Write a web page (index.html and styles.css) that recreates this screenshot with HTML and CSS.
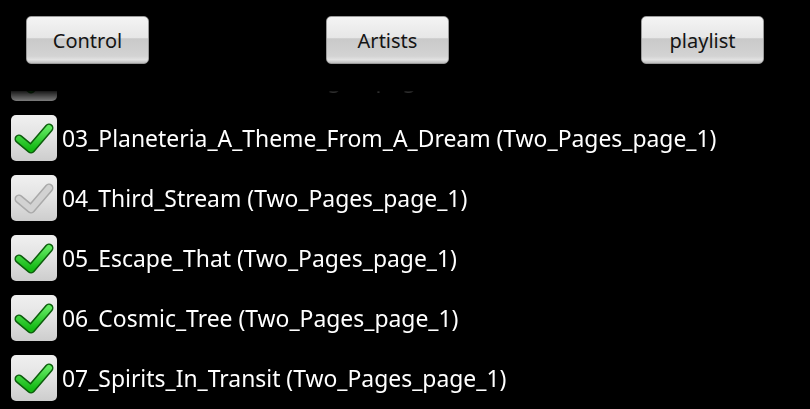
FILE: index.html
```html
<!DOCTYPE html>
<html lang="en">
<head>
    <meta charset="UTF-8">
    <title>Playlist</title>
    <link rel="stylesheet" href="styles.css">
</head>
<body>
    <div class="topbar">
        <button class="btn btn-control">Control</button>
        <button class="btn btn-artists">Artists</button>
        <button class="btn btn-playlist">playlist</button>
    </div>

    <div class="list">
        <div class="rows">
            <div class="row">
                <span class="box"><svg viewBox="0 0 46 46"><use href="#tick"/></svg></span>
                <span class="title">02_Orbital_Gate (Two_Pages_page_1)</span>
            </div>
            <div class="row">
                <span class="box"><svg viewBox="0 0 46 46"><use href="#tick"/></svg></span>
                <span class="title">03_Planeteria_A_Theme_From_A_Dream (Two_Pages_page_1)</span>
            </div>
            <div class="row">
                <span class="box off"><svg viewBox="0 0 46 46"><use href="#tick-off"/></svg></span>
                <span class="title">04_Third_Stream (Two_Pages_page_1)</span>
            </div>
            <div class="row">
                <span class="box"><svg viewBox="0 0 46 46"><use href="#tick"/></svg></span>
                <span class="title">05_Escape_That (Two_Pages_page_1)</span>
            </div>
            <div class="row">
                <span class="box"><svg viewBox="0 0 46 46"><use href="#tick"/></svg></span>
                <span class="title">06_Cosmic_Tree (Two_Pages_page_1)</span>
            </div>
            <div class="row">
                <span class="box"><svg viewBox="0 0 46 46"><use href="#tick"/></svg></span>
                <span class="title">07_Spirits_In_Transit (Two_Pages_page_1)</span>
            </div>
        </div>
    </div>

    <!-- shared check marks -->
    <svg class="defs" width="0" height="0">
        <defs>
            <linearGradient id="green" x1="0" y1="0" x2="0" y2="1">
                <stop offset="0" stop-color="#5fe85f"/>
                <stop offset="1" stop-color="#14b814"/>
            </linearGradient>
            <g id="tick" fill="none" stroke-linecap="round" stroke-linejoin="round">
                <path d="M8 24 L20 34 L38 13" stroke="#0b5e0b" stroke-width="9"/>
                <path d="M8 24 L20 34 L38 13" stroke="url(#green)" stroke-width="6"/>
            </g>
            <g id="tick-off" fill="none" stroke-linecap="round" stroke-linejoin="round">
                <path d="M8 24 L20 34 L38 13" stroke="#a9a9a9" stroke-width="9"/>
                <path d="M8 24 L20 34 L38 13" stroke="#d2d2d2" stroke-width="6"/>
            </g>
        </defs>
    </svg>
</body>
</html>
```

FILE: styles.css
```css
body {
    margin: 0;
    width: 810px;
    height: 409px;
    overflow: hidden;
    background-color: #000;
    font-family: "Noto Sans", "Open Sans", sans-serif;
}
.topbar {
    display: flex;
    align-items: center;
    height: 91px;
    padding-left: 26px;
    box-sizing: border-box;
    padding-bottom: 11px;
}
.btn {
    width: 123px;
    height: 48px;
    padding: 0;
    border: 1px solid #9a9a9a;
    border-radius: 5px;
    font-family: inherit;
    font-size: 20px;
    color: #141414;
    background: linear-gradient(#f4f4f4 0%, #e6e6e6 46%, #c9c9c9 47%, #d3d3d3 85%, #e2e2e2 93%, #bdbdbd 100%);
}
.btn-artists {
    margin-left: 177px;
}
.btn-playlist {
    margin-left: 192px;
}
/* fading edge at the top, like a scrolled list */
.list {
    height: 318px;
    overflow: hidden;
    -webkit-mask-image: linear-gradient(rgba(0,0,0,0.1), #000 18px);
    mask-image: linear-gradient(rgba(0,0,0,0.1), #000 18px);
}
.rows {
    margin-top: -43px;
}
.row {
    display: flex;
    align-items: center;
    height: 60px;
}
.box {
    display: block;
    width: 46px;
    height: 46px;
    margin-left: 11px;
    margin-right: 5px;
    border-radius: 5px;
    background: linear-gradient(#f0f0f0, #e4e4e4 45%, #cdcdcd 100%);
}
.box svg {
    display: block;
    width: 46px;
    height: 46px;
}
.title {
    color: #fff;
    font-size: 22.9px;
    white-space: nowrap;
}
.defs {
    position: absolute;
}
```
